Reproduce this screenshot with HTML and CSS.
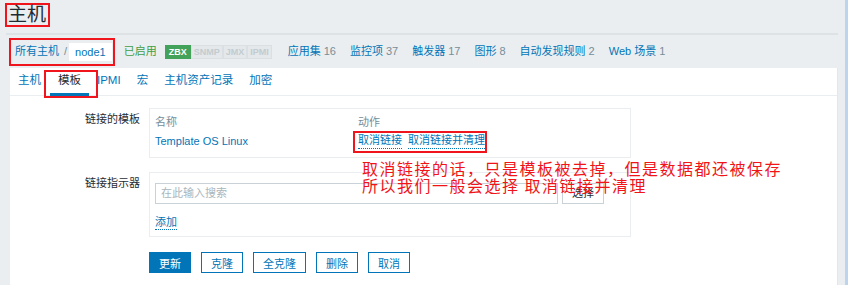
FILE: index.html
```html
<!DOCTYPE html>
<html lang="zh-CN">
<head>
<meta charset="utf-8">
<title>主机</title>
<link rel="stylesheet" href="styles.css">
</head>
<body>
<div class="main">
  <div class="header"><h1 class="title">主机</h1></div>
  <div class="divider"></div>
  <div class="nav">
    <div class="crumbs">
      <a class="link">所有主机</a><span class="sep">/</span><span class="crumb-current">node1</span>
    </div>
    <span class="status">已启用</span>
    <div class="badges">
      <span class="badge on">ZBX</span><span class="badge">SNMP</span><span class="badge">JMX</span><span class="badge">IPMI</span>
    </div>
    <a class="nav-link">应用集<span class="count">16</span></a>
    <a class="nav-link">监控项<span class="count">37</span></a>
    <a class="nav-link">触发器<span class="count">17</span></a>
    <a class="nav-link">图形<span class="count">8</span></a>
    <a class="nav-link">自动发现规则<span class="count">2</span></a>
    <a class="nav-link">Web 场景<span class="count">1</span></a>
  </div>
  <div class="panel">
    <div class="tabs">
      <a class="tab">主机</a>
      <a class="tab active">模板</a>
      <a class="tab">IPMI</a>
      <a class="tab">宏</a>
      <a class="tab">主机资产记录</a>
      <a class="tab">加密</a>
    </div>
    <div class="form">
      <div class="label">链接的模板</div>
      <div class="box box-templates">
        <div class="trow thead"><span class="col-name">名称</span><span>动作</span></div>
        <div class="trow"><a class="col-name link">Template OS Linux</a>
          <span class="actions"><a class="link dotted">取消链接</a><a class="link dotted">取消链接并清理</a></span>
        </div>
      </div>
      <div class="label">链接指示器</div>
      <div class="box box-link">
        <div class="search-row">
          <div class="input">在此输入搜索</div>
          <button class="btn-grey">选择</button>
        </div>
        <a class="link dotted add">添加</a>
      </div>
      <div></div>
      <div class="buttons">
        <button class="btn primary">更新</button>
        <button class="btn">克隆</button>
        <button class="btn">全克隆</button>
        <button class="btn">删除</button>
        <button class="btn">取消</button>
      </div>
    </div>
  </div>
</div>
<div class="strip"></div>
<div class="note">取消链接的话，只是模板被去掉，但是数据都还被保存<br>所以我们一般会选择 取消链接并清理</div>
</body>
</html>
```

FILE: styles.css
```css
html, body {
  margin: 0;
  height: 285px;
  overflow: hidden;
}
body {
  display: flex;
  background: #ebeef0;
  font: 11px/1.2 "Liberation Sans", "Noto Sans CJK SC", sans-serif;
  color: #1f2c33;
}
a { text-decoration: none; }
.main {
  flex: 1;
  padding-right: 7px;
  display: flex;
  flex-direction: column;
}
.strip {
  width: 3px;
  background: #bdd4ee;
}
.header {
  height: 30px;
  padding: 3px 0 0 5px;
}
.title {
  display: inline-block;
  margin: 0;
  border: 2px solid #f0141c;
  padding: 0 2px 0 1px;
  font-size: 19px;
  line-height: 20px;
  font-weight: normal;
  color: #1f2c33;
}
.divider {
  margin-left: 6px;
  height: 2px;
  background: #dde2e5;
}
.nav {
  display: flex;
  align-items: center;
  margin: 3px 0 2px 9px;
  height: 28px;
}
.crumbs {
  display: flex;
  align-items: center;
  height: 24px;
  border: 2px solid #f0141c;
  padding: 0 1px 0 4px;
}
.link { color: #0275b8; }
.sep {
  color: #768d99;
  margin: 0 2px 0 5px;
}
.crumb-current {
  background: #fff;
  color: #0275b8;
  height: 18px;
  line-height: 18px;
  padding: 0 6px;
}
.status {
  margin-left: 9px;
  color: #429e47;
}
.badges {
  display: flex;
  margin-left: 8px;
  margin-right: 16px;
}
.badge {
  height: 14px;
  line-height: 14px;
  padding: 0 3px;
  font-size: 9px;
  font-weight: bold;
  color: #c2ccd0;
  background: #e4e8ea;
  box-shadow: inset 0 0 0 1px #d9dfe2;
}
.badge.on {
  background: #43a25a;
  color: #fff;
  box-shadow: none;
  padding: 0 4px;
}
.nav-link {
  color: #0275b8;
  margin-right: 14px;
}
.count {
  color: #768d99;
  margin-left: 3px;
}
.panel {
  flex: 1;
  margin-left: 10px;
  background: #fff;
  border-right: 1px solid #e3e7ea;
  position: relative;
}
.tabs {
  display: flex;
  height: 27px;
  border-bottom: 1px solid #ebeef0;
}
.tab {
  position: relative;
  display: flex;
  align-items: center;
  padding: 0 8px;
  color: #0275b8;
  font-size: 11.5px;
  border-bottom: 3px solid transparent;
  height: 25px;
}
.tab.active {
  color: #1f2c33;
  border-bottom-color: #0275b8;
}
.tab.active::before {
  content: "";
  position: absolute;
  left: -6px;
  right: -9px;
  top: 2px;
  bottom: -5px;
  border: 2px solid #f0141c;
}
.tabs .tab:first-child { margin-right: 1px; }
.form {
  display: grid;
  grid-template-columns: 130px 482px;
  column-gap: 9px;
  row-gap: 14px;
  padding-top: 12px;
}
.label {
  text-align: right;
  padding-top: 5px;
}
.box {
  border: 1px solid #ebeef0;
}
.box-templates {
  padding: 5px 5px 6px;
}
.trow {
  display: flex;
  align-items: center;
  height: 19px;
}
.thead { height: 18px; color: #768d99; }
.col-name { width: 203px; }
.actions {
  position: relative;
  display: flex;
  gap: 6px;
}
.actions::before {
  content: "";
  position: absolute;
  left: -5px;
  right: -2px;
  top: -3px;
  bottom: -4px;
  border: 2px solid #f0141c;
}
.dotted {
  border-bottom: 1px dotted #0275b8;
}
.box-link {
  padding: 10px 5px 6px;
}
.search-row {
  display: flex;
  gap: 4px;
}
.input {
  width: 391px;
  height: 19px;
  line-height: 19px;
  border: 1px solid #c9d2d6;
  padding: 0 5px;
  color: #a9b6bd;
}
.btn-grey {
  width: 42px;
  height: 21px;
  border: 1px solid #c9d2d6;
  background: #fff;
  color: #1f2c33;
  font: inherit;
  padding: 0;
}
.add {
  display: inline-block;
  margin-top: 12px;
}
.buttons {
  display: flex;
  gap: 10px;
  margin-top: 1px;
}
.btn {
  height: 21px;
  padding: 0 9px;
  border: 1px solid #0275b8;
  background: #fff;
  color: #0275b8;
  font: 11px "Liberation Sans", "Noto Sans CJK SC", sans-serif;
}
.btn.primary {
  background: #0275b8;
  color: #fff;
}
.note {
  position: absolute;
  left: 362px;
  top: 160px;
  color: #f01418;
  font: 16px/17px "Noto Sans CJK SC", sans-serif;
  letter-spacing: 1.5px;
  white-space: nowrap;
}
```
